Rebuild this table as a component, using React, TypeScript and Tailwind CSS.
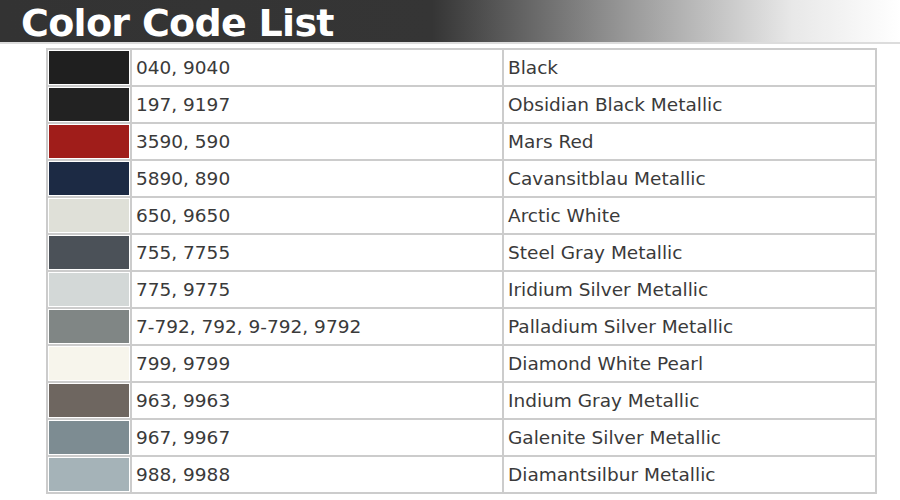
const rows = [
  { color: "#1f1f1f", code: "040, 9040", name: "Black" },
  { color: "#222222", code: "197, 9197", name: "Obsidian Black Metallic" },
  { color: "#a01d1a", code: "3590, 590", name: "Mars Red" },
  { color: "#1c2a44", code: "5890, 890", name: "Cavansitblau Metallic" },
  { color: "#dfe0d8", code: "650, 9650", name: "Arctic White" },
  { color: "#4b5158", code: "755, 7755", name: "Steel Gray Metallic" },
  { color: "#d3d8d7", code: "775, 9775", name: "Iridium Silver Metallic" },
  { color: "#808685", code: "7-792, 792, 9-792, 9792", name: "Palladium Silver Metallic" },
  { color: "#f7f5ec", code: "799, 9799", name: "Diamond White Pearl" },
  { color: "#6e6660", code: "963, 9963", name: "Indium Gray Metallic" },
  { color: "#7d8c92", code: "967, 9967", name: "Galenite Silver Metallic" },
  { color: "#a5b3b8", code: "988, 9988", name: "Diamantsilbur Metallic" },
];

export default function App() {
  return (
    <div className="w-[900px] h-[500px] bg-white overflow-hidden">
      <header className="h-[44px] bg-[linear-gradient(to_right,#333333_0%,#353535_48%,#9a9a9a_70%,#e8e8e8_88%,#ffffff_100%)] border-b-2 border-[#dcdcdc] flex items-center pl-[21px] pt-[3px]">
        <h1 className="font-['DejaVu_Sans',sans-serif] font-black text-white text-[38px] leading-none tracking-[-0.7px]">
          Color Code List
        </h1>
      </header>

      <table className="ml-[46px] mt-[4px] w-[831px] border-collapse border-2 border-[#cccccc] font-['DejaVu_Sans',sans-serif] text-[18.5px] text-[#3a3a3a]">
        <tbody>
          {rows.map((r) => (
            <tr key={r.code}>
              <td className="w-[84px] p-px border-2 border-[#cccccc]">
                <div className="h-[33px]" style={{ backgroundColor: r.color }} />
              </td>
              <td className="w-[372px] px-[4px] pt-[2px] leading-none border-2 border-[#cccccc]">{r.code}</td>
              <td className="px-[4px] pt-[2px] leading-none border-2 border-[#cccccc]">{r.name}</td>
            </tr>
          ))}
        </tbody>
      </table>
    </div>
  );
}
